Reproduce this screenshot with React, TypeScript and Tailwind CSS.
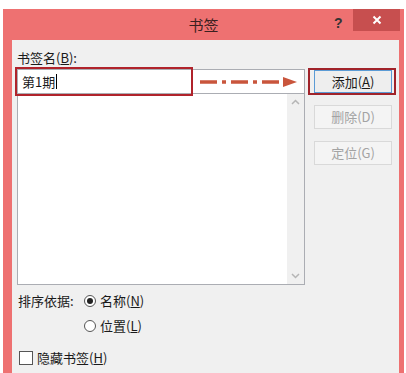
import React from "react";

const F = { fontFamily: '"Microsoft YaHei", "Noto Sans CJK SC", "Noto Sans", sans-serif' };

export default function App() {
  return (
    <div className="w-[406px] h-[373px] bg-white overflow-hidden pt-[9px] pl-[3px]" style={F}>
      <div className="w-[401px] h-[364px] bg-[#ee7171] flex flex-col">
        {/* title bar */}
        <div className="relative h-[31px] flex items-center justify-center shrink-0">
          <span className="text-[15px] text-[#3a2020] leading-none">书签</span>
          <span className="absolute left-[331px] top-[7px] text-[14px] font-bold text-[#333] leading-none" style={{ fontFamily: '"Liberation Sans", sans-serif' }}>?</span>
          <div className="absolute left-[350px] top-0 w-[47px] h-[22px] bg-[#c74f4f] flex items-center justify-center">
            <svg width="10" height="10" viewBox="0 0 10 10">
              <path d="M1.5 1.5 L8.5 8.5 M8.5 1.5 L1.5 8.5" stroke="#fff" strokeWidth="2" />
            </svg>
          </div>
        </div>
        {/* content */}
        <div className="relative ml-[9px] w-[387px] flex-1 bg-[#f0f0f0] text-[13px] text-[#1a1a1a]">
          <div className="flex pl-[5px] pt-[10px] gap-[9px]">
            <div className="w-[288px] flex flex-col">
              <div className="h-[16px] leading-[16px] mb-[3px]">书签名(<span className="underline">B</span>):</div>
              <div className="h-[25px] bg-white border border-[#abadb3] flex items-center pl-[4px]">
                <span>第1期</span>
                <span className="w-px h-[15px] bg-black ml-[1px]" />
              </div>
              <div className="h-[191px] bg-white border border-[#abadb3] border-t-0 flex">
                <div className="flex-1" />
                <div className="w-[17px] bg-[#f0f0f0] flex flex-col items-center justify-between py-[5px]">
                  <svg width="9" height="6" viewBox="0 0 9 6"><path d="M1 5 L4.5 1.5 L8 5" stroke="#b5b5b5" strokeWidth="1.5" fill="none" /></svg>
                  <svg width="9" height="6" viewBox="0 0 9 6"><path d="M1 1 L4.5 4.5 L8 1" stroke="#b5b5b5" strokeWidth="1.5" fill="none" /></svg>
                </div>
              </div>
            </div>
            <div className="w-[78px] flex flex-col pt-[20px] gap-[12px]">
              <div className="h-[23px] border border-[#5b9bd5] bg-[#eeeeee] flex items-center justify-center">添加(<span className="underline">A</span>)</div>
              <div className="h-[24px] border border-[#d9d9d9] bg-[#f4f4f4] text-[#a3a3a3] flex items-center justify-center">删除(D)</div>
              <div className="h-[24px] border border-[#d9d9d9] bg-[#f4f4f4] text-[#a3a3a3] flex items-center justify-center">定位(G)</div>
            </div>
          </div>
          {/* sort */}
          <div className="flex pl-[6px] mt-[7px]">
            <div className="w-[66px] h-[17px] leading-[17px]">排序依据:</div>
            <div className="flex flex-col gap-[8px]">
              <div className="flex items-center gap-[4px] h-[17px]">
                <span className="w-[12px] h-[12px] rounded-full border border-[#555] bg-white flex items-center justify-center">
                  <span className="w-[6px] h-[6px] rounded-full bg-[#222]" />
                </span>
                <span>名称(<span className="underline">N</span>)</span>
              </div>
              <div className="flex items-center gap-[4px] h-[17px]">
                <span className="w-[12px] h-[12px] rounded-full border border-[#555] bg-white" />
                <span>位置(<span className="underline">L</span>)</span>
              </div>
            </div>
          </div>
          <div className="flex items-center gap-[4px] pl-[7px] mt-[15px] h-[17px]">
            <span className="w-[14px] h-[14px] border border-[#555] bg-white" />
            <span>隐藏书签(<span className="underline">H</span>)</span>
          </div>
          {/* annotations */}
          <div className="absolute left-[3px] top-[27px] w-[178px] h-[29px] border-2 border-[#b0232b]" />
          <div className="absolute left-[296px] top-[28px] w-[88px] h-[27px] border-2 border-[#a0232a]" />
          <svg className="absolute left-[187px] top-[36px]" width="100" height="12" viewBox="0 0 100 12">
            <line x1="1" y1="6" x2="86" y2="6" stroke="#c9553c" strokeWidth="3.5" strokeDasharray="17 5 4 5" />
            <path d="M84 1 L98 6 L84 11 Z" fill="#c9553c" />
          </svg>
        </div>
      </div>
    </div>
  );
}
